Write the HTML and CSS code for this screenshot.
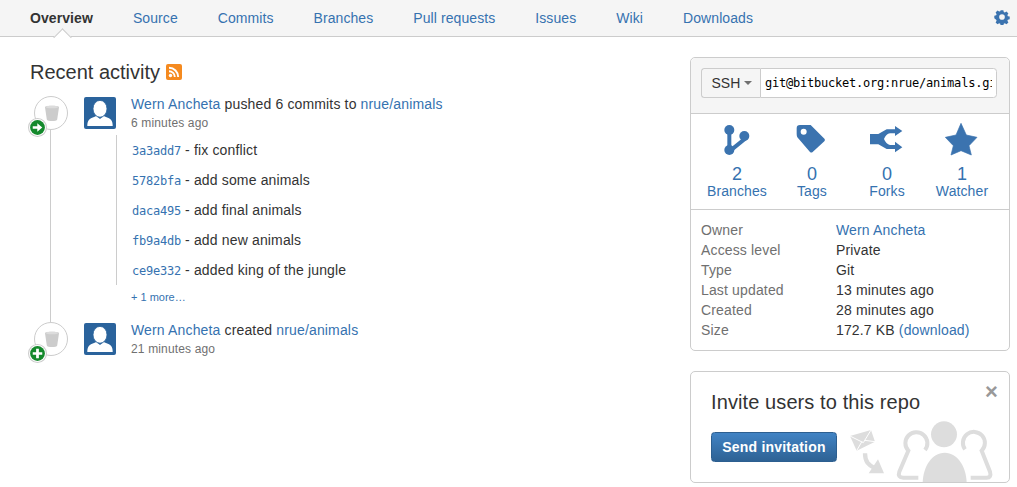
FILE: index.html
```html
<!DOCTYPE html>
<html lang="en">
<head>
<meta charset="utf-8">
<title>nrue/animals</title>
<link rel="stylesheet" href="styles.css">
</head>
<body>
<nav class="tabs">
  <a class="tab active">Overview</a>
  <a class="tab">Source</a>
  <a class="tab">Commits</a>
  <a class="tab">Branches</a>
  <a class="tab">Pull requests</a>
  <a class="tab">Issues</a>
  <a class="tab">Wiki</a>
  <a class="tab">Downloads</a>
  <svg class="gear" viewBox="0 0 24 24"><path fill-rule="evenodd" d="M9.600 0h4.800l.7 3.300 1.900.8 2.900-1.800 3.400 3.400-1.800 2.900.8 1.900 3.300.7v4.800l-3.300.7-.8 1.900 1.800 2.900-3.400 3.400-2.900-1.800-1.900.8-.7 3.300H9.600l-.7-3.300-1.900-.8-2.900 1.800-3.400-3.400 1.800-2.900-.8-1.900L-1.600 14.400V9.600l3.300-.7.8-1.900-1.800-2.900 3.400-3.400 2.900 1.800 1.900-.8zM12 7a5 5 0 1 0 0 10 5 5 0 0 0 0-10z" transform="translate(1.800 1.800) scale(.85)"/></svg>
</nav>

<div class="page">
  <main class="main">
    <h1 class="heading">Recent activity
      <svg class="rss" viewBox="0 0 16 16"><rect width="16" height="16" rx="2" fill="#f58a1f"/><circle cx="4.500" cy="11.500" r="1.700" fill="#fff"/><path d="M3 7.200a5.800 5.800 0 0 1 5.800 5.800M3 3.800a9.200 9.200 0 0 1 9.200 9.200" fill="none" stroke="#fff" stroke-width="1.900"/></svg>
    </h1>

    <section class="event first">
      <div class="marker">
        <svg class="bucket" viewBox="0 0 16 18"><path d="M1 3.200C1 1.300 15 1.300 15 3.200L13.200 15.500C13 17.500 3 17.500 2.800 15.500z" fill="#ccc"/><ellipse cx="8" cy="3" rx="6.300" ry="1.300" fill="#dcdcdc"/></svg>
        <svg class="badge" viewBox="0 0 18 18"><circle cx="9" cy="9" r="8.500" fill="#fff" stroke="#ccc"/><circle cx="9" cy="9" r="7" fill="#14892c"/><path d="M4.500 7.700h4.300V5l4.700 4-4.700 4v-2.700H4.500z" fill="#fff"/></svg>
      </div>
      <svg class="avatar" viewBox="0 0 32 32"><rect width="32" height="32" rx="2" fill="#2a639c"/><path d="M3.300 29c0-3 .5-5 2-6.500 2-2 5-2.500 7-3.500l3.700 3 3.700-3c2 1 5 1.500 7 3.500 1.500 1.500 2 3.500 2 6.500z" fill="#fff"/><ellipse cx="16" cy="11.800" rx="7" ry="8.400" fill="#fff" stroke="#2a639c" stroke-width=".8"/></svg>
      <div class="body">
        <p class="title"><a>Wern Ancheta</a> pushed 6 commits to <a>nrue/animals</a></p>
        <p class="meta">6 minutes ago</p>
        <ul class="commits">
          <li><a class="hash">3a3add7</a> - fix conflict</li>
          <li><a class="hash">5782bfa</a> - add some animals</li>
          <li><a class="hash">daca495</a> - add final animals</li>
          <li><a class="hash">fb9a4db</a> - add new animals</li>
          <li><a class="hash">ce9e332</a> - added king of the jungle</li>
        </ul>
        <a class="more">+ 1 more…</a>
      </div>
    </section>

    <section class="event">
      <div class="marker">
        <svg class="bucket" viewBox="0 0 16 18"><path d="M1 3.200C1 1.300 15 1.300 15 3.200L13.200 15.500C13 17.500 3 17.500 2.800 15.500z" fill="#ccc"/><ellipse cx="8" cy="3" rx="6.300" ry="1.300" fill="#dcdcdc"/></svg>
        <svg class="badge" viewBox="0 0 18 18"><circle cx="9" cy="9" r="8.500" fill="#fff" stroke="#ccc"/><circle cx="9" cy="9" r="7" fill="#14892c"/><path d="M7.700 4.500h2.600v3.200h3.200v2.600h-3.200v3.200H7.700v-3.200H4.500V7.700h3.200z" fill="#fff"/></svg>
      </div>
      <svg class="avatar" viewBox="0 0 32 32"><rect width="32" height="32" rx="2" fill="#2a639c"/><path d="M3.300 29c0-3 .5-5 2-6.500 2-2 5-2.500 7-3.500l3.700 3 3.700-3c2 1 5 1.500 7 3.500 1.500 1.500 2 3.500 2 6.500z" fill="#fff"/><ellipse cx="16" cy="11.800" rx="7" ry="8.400" fill="#fff" stroke="#2a639c" stroke-width=".8"/></svg>
      <div class="body">
        <p class="title"><a>Wern Ancheta</a> created <a>nrue/animals</a></p>
        <p class="meta">21 minutes ago</p>
      </div>
    </section>
  </main>

  <aside class="side">
    <section class="card repo">
      <div class="clone">
        <div class="clone-group">
          <span class="proto">SSH<i class="caret"></i></span>
          <input class="url" type="text" value="git@bitbucket.org:nrue/animals.git" readonly>
        </div>
      </div>
      <div class="stats">
        <a class="stat">
          <svg class="stat-icon" viewBox="120 219 96 96"><g fill="#3b73af"><circle cx="145" cy="240" r="15"/><circle cx="190" cy="258" r="15"/><circle cx="145" cy="300" r="15"/></g><path d="M145 240V300M190 258V268L148 302" fill="none" stroke="#3b73af" stroke-width="12"/></svg>
          <span class="num">2</span><span class="lab">Branches</span>
        </a>
        <a class="stat">
          <svg class="stat-icon" viewBox="348 219 96 96"><path fill-rule="evenodd" fill="#3b73af" d="M360 225H392L434 267Q436 271 433 274L398 306Q394 309 390 306L352 262Q350 258 350 252V235Q350 225 360 225zM371 236a9 9 0 1 0 0 18 9 9 0 0 0 0-18z"/></svg>
          <span class="num">0</span><span class="lab">Tags</span>
        </a>
        <a class="stat">
          <svg class="stat-icon" viewBox="573 219 96 96"><path fill="#3b73af" d="M570 252H595L620 238H645V228L667 243 645 258V250H630Q618 252 612 267 618 282 630 285H645V275L667 292 645 307V297H620L595 283H570z"/></svg>
          <span class="num">0</span><span class="lab">Forks</span>
        </a>
        <a class="stat">
          <svg class="stat-icon" viewBox="798 219 96 96"><path fill="#3b73af" stroke="#3b73af" stroke-width="2" stroke-linejoin="round" d="M843 220L859 255 891 262 867 287 874 315 843 302 813 315 820 287 796 262 828 255z"/></svg>
          <span class="num">1</span><span class="lab">Watcher</span>
        </a>
      </div>
      <dl class="details">
        <dt>Owner</dt><dd><a>Wern Ancheta</a></dd>
        <dt>Access level</dt><dd>Private</dd>
        <dt>Type</dt><dd>Git</dd>
        <dt>Last updated</dt><dd>13 minutes ago</dd>
        <dt>Created</dt><dd>28 minutes ago</dd>
        <dt>Size</dt><dd>172.7 KB <a>(download)</a></dd>
      </dl>
    </section>

    <section class="card invite">
      <span class="close">×</span>
      <h2 class="invite-title">Invite users to this repo</h2>
      <button class="send" type="button">Send invitation</button>
      <svg class="people" viewBox="0 0 510 216">
        <g fill="#ddd">
          <path d="M30 78L93 60 105 95 50 122z"/>
          <path d="M114 148L132 190 86 190z"/>
          <circle cx="312" cy="73" r="39"/>
          <path d="M248 216C250 170 275 128 314 128 353 128 378 170 380 216z"/>
        </g>
        <path d="M30 78L70 98 93 60M50 122L66 94M105 95L74 91" fill="none" stroke="#fff" stroke-width="3"/>
        <g fill="none" stroke="#ddd">
          <path d="M75 130C75 155 85 165 105 175" stroke-width="13"/>
          <path d="M255 120A33 33 0 1 0 205 122L178 185Q172 203 190 203H235" stroke-width="12"/>
          <path d="M375 118A33 33 0 1 1 425 122L450 185Q455 203 440 203H392" stroke-width="12"/>
        </g>
      </svg>
    </section>
  </aside>
</div>
</body>
</html>
```

FILE: styles.css
```css
* { box-sizing: border-box; }
html, body { margin: 0; height: 100%; }
body {
  font-family: "Liberation Sans", Arial, sans-serif;
  font-size: 14px;
  line-height: 20px;
  letter-spacing: .15px;
  color: #333;
  background: #fff;
  overflow: hidden;
}
a { color: #3572b0; text-decoration: none; }

.tabs {
  position: relative;
  display: flex;
  align-items: center;
  gap: 40px;
  height: 37px;
  padding: 0 7px 0 30px;
  background: #f5f5f5;
  border-bottom: 1px solid #ccc;
  letter-spacing: .08px;
}
.tab { color: #3572b0; white-space: nowrap; }
.tab.active { position: relative; color: #333; font-weight: bold; }
.tab.active::after {
  content: "";
  position: absolute;
  left: 26px;
  top: 23px;
  width: 12px;
  height: 12px;
  background: #fff;
  border-left: 1px solid #ccc;
  border-top: 1px solid #ccc;
  transform: rotate(45deg);
}
.gear { width: 16px; height: 16px; margin: -2px 0 0 auto; fill: #3b73af; }

.page { display: flex; padding: 20px 7px 0 30px; }
.main { flex: 1; min-width: 0; }
.heading {
  display: flex;
  align-items: center;
  gap: 6px;
  margin: 5px 0 14px;
  font-size: 20px;
  line-height: 20px;
  font-weight: normal;
  letter-spacing: 0;
}
.rss { width: 16px; height: 16px; }

.event {
  position: relative;
  display: flex;
  align-items: flex-start;
  padding-left: 4px;
}
.event.first { margin-bottom: 17px; }
.event.first::before {
  content: "";
  position: absolute;
  left: 20px;
  top: 33px;
  bottom: -17px;
  width: 1px;
  background: #ccc;
}
.marker {
  position: relative;
  flex: none;
  width: 34px;
  height: 34px;
  margin-right: 16px;
  border: 1px solid #ccc;
  border-radius: 50%;
  background: #fff;
  display: flex;
  align-items: center;
  justify-content: center;
}
.bucket { width: 16px; height: 18px; margin-left: 1px; }
.badge {
  position: absolute;
  left: -7px;
  top: 21px;
  width: 19px;
  height: 19px;
}
.avatar { flex: none; width: 32px; height: 32px; margin: 1px 15px 0 0; }
.body { min-width: 0; }
.title { margin: 0; line-height: 16px; }
.meta { margin: 3px 0 0; font-size: 12px; line-height: 16px; color: #707070; }
.commits {
  list-style: none;
  margin: 4px 0 0 -15px;
  padding: 0 0 0 15px;
  border-left: 1px solid #ccc;
}
.commits li { height: 30px; line-height: 30px; white-space: nowrap; }
.hash { font-family: "DejaVu Sans Mono", "Liberation Mono", monospace; font-size: 12px; letter-spacing: -.22px; }
.more { display: block; font-size: 11px; line-height: 16px; margin-top: 4px; letter-spacing: 0; }

.side { flex: none; width: 320px; display: flex; flex-direction: column; gap: 20px; }
.card { border: 1px solid #ccc; border-radius: 5px; background: #fff; }
.clone {
  padding: 10px 12px 10px 10px;
  height: 56px;
  background: #f5f5f5;
  border-bottom: 1px solid #ccc;
  border-radius: 5px 5px 0 0;
}
.clone-group { display: flex; height: 30px; }
.proto {
  flex: none;
  width: 59px;
  padding-left: 1px;
  display: flex;
  align-items: center;
  justify-content: center;
  gap: 3px;
  background: #f5f5f5;
  border: 1px solid #ccc;
  border-right: 0;
  border-radius: 3.5px 0 0 3.5px;
}
.caret {
  width: 0;
  height: 0;
  border-left: 4px solid transparent;
  border-right: 4px solid transparent;
  border-top: 4px solid #707070;
}
.url {
  flex: 1;
  min-width: 0;
  padding: 0 4px;
  font: 12px/28px "DejaVu Sans Mono", "Liberation Mono", monospace;
  letter-spacing: -.22px;
  color: #000;
  background: #fff;
  border: 1px solid #ccc;
  border-radius: 0 3.5px 3.5px 0;
  outline: 0;
}
.stats {
  display: grid;
  grid-template-columns: repeat(4, 75px);
  padding: 9px 8.5px 0;
  height: 96px;
  border-bottom: 1px solid #ccc;
  letter-spacing: .1px;
}
.stat { display: flex; flex-direction: column; align-items: center; }
.stat-icon { width: 32px; height: 32px; overflow: visible; }
.num { font-size: 18px; line-height: 20px; margin-top: 9px; }
.lab { line-height: 16px; margin-top: -1px; }
.details {
  display: grid;
  grid-template-columns: 135px 1fr;
  margin: 0;
  padding: 10px;
  line-height: 20px;
}
.details dt { color: #707070; }
.details dd { margin: 0; }

.invite { position: relative; height: 112px; padding: 19px 20px 0; overflow: hidden; }
.close {
  position: absolute;
  right: 11px;
  top: 9px;
  font-size: 22px;
  line-height: 22px;
  font-weight: bold;
  color: #999;
}
.invite-title { margin: 0 0 19px; font-size: 20px; line-height: 22px; font-weight: normal; letter-spacing: .1px; }
.send {
  display: block;
  width: 126px;
  height: 30px;
  padding: 0;
  font: bold 14px "Liberation Sans", Arial, sans-serif;
  letter-spacing: .2px;
  color: #fff;
  background: linear-gradient(#4183c4, #2e6294);
  border: 1px solid #2d5f90;
  border-radius: 3.5px;
}
.people { position: absolute; left: 149px; top: 38px; width: 170px; height: 72px; }
```
